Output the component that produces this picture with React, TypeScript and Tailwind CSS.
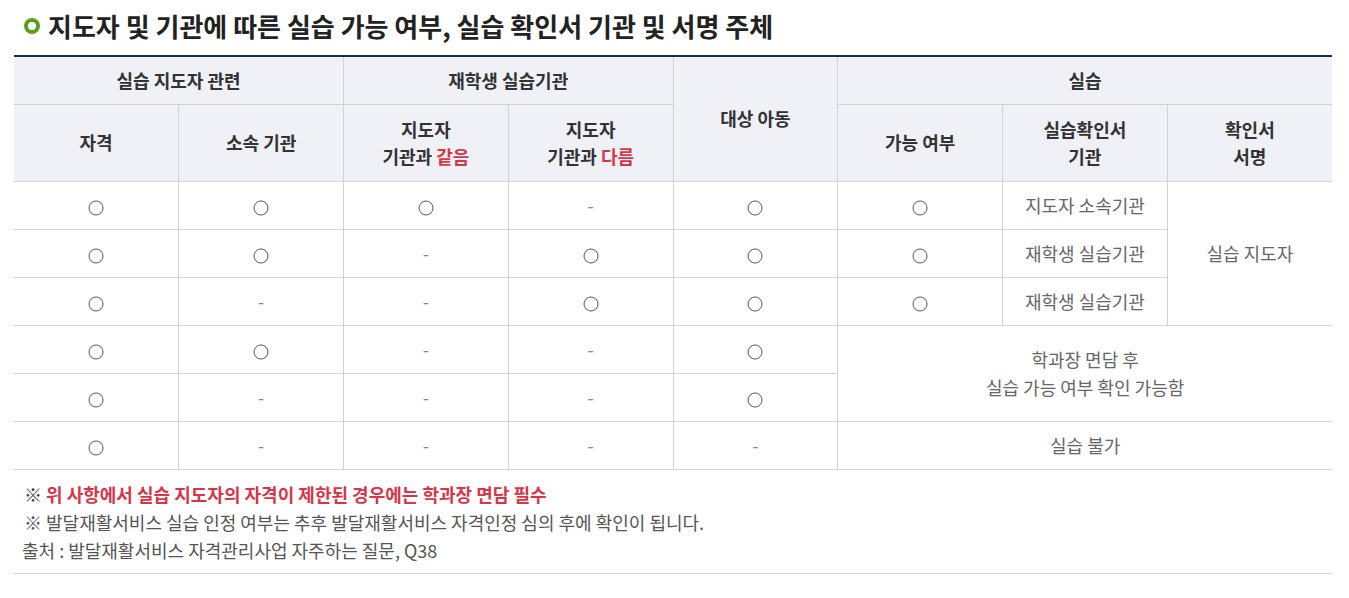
import React from "react";

const Circle = () => (
  <svg width="16" height="16" viewBox="0 0 16 16" className="inline-block align-middle">
    <circle cx="8" cy="8" r="7" fill="none" stroke="#555" strokeWidth="1" />
  </svg>
);

const Dash = () => <span className="text-[#888]">-</span>;

const td = "border border-[#d3d3d3] h-[48px] text-center align-middle text-[18px] text-[#666] p-0";
const th = "border border-[#d3d3d3] bg-[#f0f1f6] text-center align-middle text-[18px] font-bold text-[#333] p-0";

export default function App() {
  const font = { fontFamily: '"Noto Sans CJK KR", "Noto Sans", sans-serif' };
  return (
    <div className="bg-white w-[1349px] h-[598px]" style={font}>
      <div className="ml-[14px] w-[1318px] pt-[8px]">
        <div className="flex items-center h-[36px] mb-[11px]">
          <span className="shrink-0 ml-[10px] w-[16px] h-[16px] rounded-full border-[4px] border-[#5a9e1f] mr-[8px]" />
          <h2 className="text-[26px] font-bold text-[#222] leading-none">
            지도자 및 기관에 따른 실습 가능 여부, 실습 확인서 기관 및 서명 주체
          </h2>
        </div>
        <table className="w-full border-collapse table-fixed border-t-2 border-t-[#1c2b52] border-l-0 border-r-0">
          <colgroup>
            {Array.from({ length: 8 }).map((_, i) => (
              <col key={i} className="w-[12.5%]" />
            ))}
          </colgroup>
          <thead>
            <tr className="h-[48px]">
              <th colSpan={2} className={th + " border-l-0"}>실습 지도자 관련</th>
              <th colSpan={2} className={th}>재학생 실습기관</th>
              <th rowSpan={2} className={th}>대상 아동</th>
              <th colSpan={3} className={th + " border-r-0"}>실습</th>
            </tr>
            <tr className="h-[77px]">
              <th className={th + " border-l-0"}>자격</th>
              <th className={th}>소속 기관</th>
              <th className={th + " leading-[27px]"}>
                지도자
                <br />
                기관과 <span className="text-[#d6364a]">같음</span>
              </th>
              <th className={th + " leading-[27px]"}>
                지도자
                <br />
                기관과 <span className="text-[#d6364a]">다름</span>
              </th>
              <th className={th}>가능 여부</th>
              <th className={th + " leading-[27px]"}>
                실습확인서
                <br />
                기관
              </th>
              <th className={th + " leading-[27px] border-r-0"}>
                확인서
                <br />
                서명
              </th>
            </tr>
          </thead>
          <tbody>
            <tr>
              <td className={td + " border-l-0"}><Circle /></td>
              <td className={td}><Circle /></td>
              <td className={td}><Circle /></td>
              <td className={td}><Dash /></td>
              <td className={td}><Circle /></td>
              <td className={td}><Circle /></td>
              <td className={td}>지도자 소속기관</td>
              <td rowSpan={3} className={td + " border-r-0"}>실습 지도자</td>
            </tr>
            <tr>
              <td className={td + " border-l-0"}><Circle /></td>
              <td className={td}><Circle /></td>
              <td className={td}><Dash /></td>
              <td className={td}><Circle /></td>
              <td className={td}><Circle /></td>
              <td className={td}><Circle /></td>
              <td className={td}>재학생 실습기관</td>
            </tr>
            <tr>
              <td className={td + " border-l-0"}><Circle /></td>
              <td className={td}><Dash /></td>
              <td className={td}><Dash /></td>
              <td className={td}><Circle /></td>
              <td className={td}><Circle /></td>
              <td className={td}><Circle /></td>
              <td className={td}>재학생 실습기관</td>
            </tr>
            <tr>
              <td className={td + " border-l-0"}><Circle /></td>
              <td className={td}><Circle /></td>
              <td className={td}><Dash /></td>
              <td className={td}><Dash /></td>
              <td className={td}><Circle /></td>
              <td rowSpan={2} colSpan={3} className={td + " border-r-0 leading-[28px]"}>
                학과장 면담 후
                <br />
                실습 가능 여부 확인 가능함
              </td>
            </tr>
            <tr>
              <td className={td + " border-l-0"}><Circle /></td>
              <td className={td}><Dash /></td>
              <td className={td}><Dash /></td>
              <td className={td}><Dash /></td>
              <td className={td}><Circle /></td>
            </tr>
            <tr>
              <td className={td + " border-l-0"}><Circle /></td>
              <td className={td}><Dash /></td>
              <td className={td}><Dash /></td>
              <td className={td}><Dash /></td>
              <td className={td}><Dash /></td>
              <td colSpan={3} className={td + " border-r-0"}>실습 불가</td>
            </tr>
          </tbody>
        </table>
        <div className="border-b border-[#d3d3d3] pt-[10px] pb-[9px] pl-[10px] text-[18px] leading-[28px] text-[#555]">
          <p>
            <span className="text-[#444]">※ </span>
            <span className="text-[#d6364a] font-bold">위 사항에서 실습 지도자의 자격이 제한된 경우에는 학과장 면담 필수</span>
          </p>
          <p>※ 발달재활서비스 실습 인정 여부는 추후 발달재활서비스 자격인정 심의 후에 확인이 됩니다.</p>
          <p className="-ml-[2px]">출처 : 발달재활서비스 자격관리사업 자주하는 질문, Q38</p>
        </div>
      </div>
    </div>
  );
}
